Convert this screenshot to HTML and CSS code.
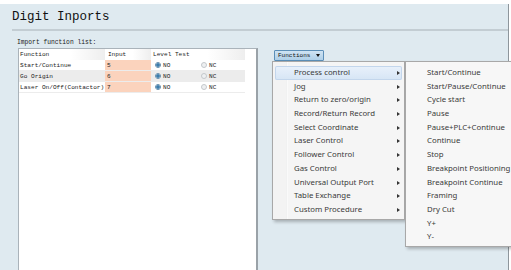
FILE: index.html
```html
<!DOCTYPE html>
<html lang="en">
<head>
<meta charset="UTF-8">
<title>Digit Inports</title>
<link rel="stylesheet" href="styles.css">
</head>
<body>

<div class="panel">
  <h1 class="title">Digit Inports</h1>

  <div class="content">
    <div class="left">
      <div class="caption">Import function list:</div>
      <div class="list-box">
        <table class="io-table">
          <thead>
            <tr>
              <th class="c-func">Function</th>
              <th class="c-input">Input</th>
              <th class="c-level">Level Test</th>
            </tr>
          </thead>
          <tbody>
            <tr>
              <td class="c-func">Start/Continue</td>
              <td class="c-input">5</td>
              <td class="c-level"><span class="radio on"></span><span class="opt">NO</span><span class="radio"></span><span class="opt">NC</span></td>
            </tr>
            <tr class="alt">
              <td class="c-func">Go Origin</td>
              <td class="c-input">6</td>
              <td class="c-level"><span class="radio on"></span><span class="opt">NO</span><span class="radio"></span><span class="opt">NC</span></td>
            </tr>
            <tr>
              <td class="c-func">Laser On/Off(Contactor)</td>
              <td class="c-input">7</td>
              <td class="c-level"><span class="radio on"></span><span class="opt">NO</span><span class="radio"></span><span class="opt">NC</span></td>
            </tr>
          </tbody>
        </table>
      </div>
    </div>

    <div class="right">
      <button class="fn-btn">Functions <span class="caret"></span></button>

      <ul class="menu main-menu">
        <li class="active">Process control<span class="arrow"></span></li>
        <li>Jog<span class="arrow"></span></li>
        <li>Return to zero/origin<span class="arrow"></span></li>
        <li>Record/Return Record<span class="arrow"></span></li>
        <li>Select Coordinate<span class="arrow"></span></li>
        <li>Laser Control<span class="arrow"></span></li>
        <li>Follower Control<span class="arrow"></span></li>
        <li>Gas Control<span class="arrow"></span></li>
        <li>Universal Output Port<span class="arrow"></span></li>
        <li>Table Exchange<span class="arrow"></span></li>
        <li>Custom Procedure<span class="arrow"></span></li>
      </ul>

      <ul class="menu sub-menu">
        <li>Start/Continue</li>
        <li>Start/Pause/Continue</li>
        <li>Cycle start</li>
        <li>Pause</li>
        <li>Pause+PLC+Continue</li>
        <li>Continue</li>
        <li>Stop</li>
        <li>Breakpoint Positioning</li>
        <li>Breakpoint Continue</li>
        <li>Framing</li>
        <li>Dry Cut</li>
        <li>Y+</li>
        <li>Y-</li>
      </ul>
    </div>
  </div>
</div>

</body>
</html>
```

FILE: styles.css
```css
body {
  margin: 0;
  width: 511px;
  height: 270px;
  overflow: hidden;
  background: #fff;
  font-family: "Liberation Mono", monospace;
  color: #222;
}

.panel {
  margin-top: 4px;
  width: 509px;
  height: 266px;
  background: #dfeaf0;
  border-right: 1px solid #8e969c;
  box-sizing: border-box;
  position: relative;
}

.title {
  margin: 0 0 0 12px;
  padding-top: 5px;
  height: 20px;
  font-size: 12.5px;
  font-weight: normal;
  line-height: 16px;
  color: #111;
  border-bottom: 2px solid #c3cdd3;
}

.content {
  display: flex;
  padding-top: 8px;
}

.left {
  margin-left: 17px;
  width: 243px;
}

.caption {
  font-size: 6.3px;
  line-height: 8px;
  height: 9px;
  color: #222;
}

.list-box {
  margin-left: 1px;
  width: 240px;
  height: 230px;
  background: #fff;
  border: 1px solid #aab3ba;
  border-right: 2px solid #9aa2a8;
  box-sizing: border-box;
}

.io-table {
  border-collapse: collapse;
  width: 226px;
  font-size: 6.1px;
  color: #222;
  white-space: nowrap;
}

.io-table th {
  font-weight: normal;
  text-align: left;
  height: 11px;
  padding: 0;
  background: linear-gradient(90deg, #fff 0%, #fff 60%, #eeeeee 100%);
}

.io-table td {
  height: 10px;
  padding: 0;
  border-bottom: 1px solid #ececec;
}

.io-table tr.alt td {
  background: #ececec;
}

.c-func {
  width: 85px;
  padding-left: 1px !important;
}

.io-table td.c-input {
  width: 45px;
  padding-left: 2px;
  background: #fbd3bd !important;
}

.io-table th.c-input {
  padding-left: 3px;
}

.c-level {
  padding-left: 2px !important;
}

.radio {
  display: inline-block;
  width: 4px;
  height: 4px;
  border-radius: 50%;
  border: 1px solid #c4c8cc;
  background: #eef0f2;
  vertical-align: -1px;
  margin-left: 2px;
}

.radio.on {
  border-color: #6d93b0;
  background: radial-gradient(circle, #2f6f9c 0%, #4f8cba 55%, #d6e4ef 70%);
}

.opt {
  display: inline-block;
  width: 36px;
  margin-left: 2px;
}

.right {
  margin-left: 14px;
  position: relative;
  padding-top: 11px;
}

.fn-btn {
  display: flex;
  align-items: center;
  gap: 3px;
  height: 11px;
  width: 50px;
  padding: 0 0 0 3px;
  font-family: "Liberation Mono", monospace;
  font-size: 6px;
  color: #111;
  background: linear-gradient(#cfe3f2, #aecfe8);
  border: 1px solid #5c8fb8;
  border-radius: 1px;
}

.caret {
  display: inline-block;
  margin-left: 3px;
  border-left: 2.5px solid transparent;
  border-right: 2.5px solid transparent;
  border-top: 3px solid #111;
}

.menu {
  list-style: none;
  margin: 0;
  padding: 4px 0 2px 0;
  position: absolute;
  font-family: "Noto Sans", sans-serif;
  font-size: 7.8px;
  color: #3a3a3a;
  background: #f3f3f3;
  border: 1px solid #a8a8a8;
  box-shadow: 2px 2px 3px rgba(0,0,0,0.25);
  white-space: nowrap;
}

.menu li {
  height: 13.7px;
  line-height: 13.7px;
  padding-left: 21px;
  position: relative;
}

.main-menu {
  left: -2px;
  top: 22px;
  width: 131px;
  background: linear-gradient(90deg, #f3f3f3 0, #f3f3f3 13px, #e2e3e3 13px, #ffffff 14px, #f5f5f5 15px);
}

.main-menu li.active {
  margin: 0 2px;
  padding-left: 19px;
  background: linear-gradient(#e9f1fb, #d6e5f5);
  box-shadow: inset 0 0 0 1px #c3d6ec;
  border-radius: 2px;
}

.arrow {
  position: absolute;
  right: 4px;
  top: 5px;
  border-top: 2px solid transparent;
  border-bottom: 2px solid transparent;
  border-left: 3px solid #333;
}

.main-menu li.active .arrow {
  right: 2px;
}

.sub-menu {
  left: 131px;
  top: 22px;
  width: 120px;
  z-index: 2;
  background: #f7f7f7;
}
```
